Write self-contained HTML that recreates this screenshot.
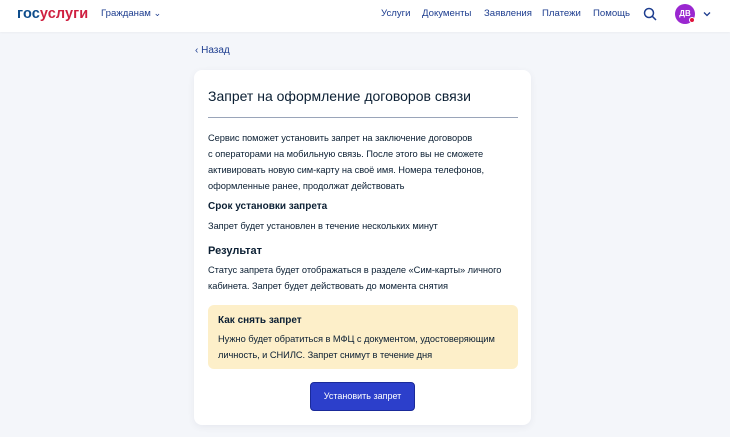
<!DOCTYPE html>
<html><head><meta charset="utf-8"><style>
*{margin:0;padding:0;box-sizing:border-box}
body{width:730px;height:437px;overflow:hidden;background:#f4f6fa;font-family:"Liberation Sans","Noto Sans CJK SC",sans-serif;color:#0b1f33;position:relative}
.hdr{position:absolute;left:0;top:0;width:730px;height:32px;background:#fff;box-shadow:0 1px 2px rgba(0,0,0,.04)}
.a{position:absolute;white-space:nowrap}
.logo{left:17px;top:6px;font-size:14.5px;font-weight:bold;letter-spacing:.1px}
.nav{top:8px;font-size:9.6px;color:#1d3d8f}
.card{position:absolute;left:194px;top:70px;width:337px;height:355px;background:#fff;border-radius:8px;box-shadow:0 2px 8px rgba(0,20,60,.06)}
.t{font-size:9.3px;line-height:16px;color:#0b1f33;letter-spacing:-0.05px}
.h{font-size:10.5px;font-weight:bold;color:#0b1f33}
</style></head><body>
<div class="hdr">
<div class="a logo"><span style="color:#0d4c8b">гос</span><span style="color:#cf1f40">услуги</span></div>
<div class="a nav" style="left:101px">Гражданам <span style="font-size:9px">&#x2304;</span></div>
<div class="a nav" style="left:381px">Услуги</div>
<div class="a nav" style="left:422px">Документы</div>
<div class="a nav" style="left:484px">Заявления</div>
<div class="a nav" style="left:542px">Платежи</div>
<div class="a nav" style="left:593px">Помощь</div>
<svg class="a" style="left:643px;top:7px" width="14" height="14" viewBox="0 0 14 14"><circle cx="6" cy="6" r="4.5" fill="none" stroke="#1d3d8f" stroke-width="1.5"/><path d="M9.3 9.3L13 13" stroke="#1d3d8f" stroke-width="1.5"/></svg>
<div class="a" style="left:675px;top:4px;width:20px;height:20px;border-radius:50%;background:#9a27d0;color:#fff;font-size:8px;font-weight:bold;text-align:center;line-height:20px">ДВ</div>
<div class="a" style="left:689px;top:17px;width:6px;height:6px;border-radius:50%;background:#e0113a;border:1px solid #fff"></div>
<svg class="a" style="left:703px;top:11px" width="8" height="6" viewBox="0 0 8 6"><path d="M1 1.5L4 4.5L7 1.5" fill="none" stroke="#1d3d8f" stroke-width="1.3"/></svg>
</div>
<div class="a" style="left:195px;top:45px;font-size:10px;color:#1d3d8f">‹ Назад</div>
<div class="card">
<div class="a" style="left:14px;top:18px;font-size:14px;color:#0b1f33">Запрет на оформление договоров связи</div>
<div class="a" style="left:14px;top:47px;width:310px;height:1px;background:#9aa5b9"></div>
<div class="a t" style="left:14px;top:60px">Сервис поможет установить запрет на заключение договоров<br>с операторами на мобильную связь. После этого вы не сможете<br>активировать новую сим-карту на своё имя. Номера телефонов,<br>оформленные ранее, продолжат действовать</div>
<div class="a h" style="left:14px;top:131px;font-size:10px">Срок установки запрета</div>
<div class="a t" style="left:14px;top:148px">Запрет будет установлен в течение нескольких минут</div>
<div class="a h" style="left:14px;top:175px;font-size:11px">Результат</div>
<div class="a t" style="left:14px;top:192px">Статус запрета будет отображаться в разделе «Сим-карты» личного<br>кабинета. Запрет будет действовать до момента снятия</div>
<div class="a" style="left:14px;top:235px;width:310px;height:64px;background:#fdefc9;border-radius:6px"></div>
<div class="a h" style="left:24px;top:245px;font-size:10px">Как снять запрет</div>
<div class="a t" style="left:24px;top:261px">Нужно будет обратиться в МФЦ с документом, удостоверяющим<br>личность, и СНИЛС. Запрет снимут в течение дня</div>
<div class="a" style="left:116px;top:312px;width:105px;height:29px;background:#2c3fcb;border:1px solid #1a2a9a;border-radius:4px;color:#fff;font-size:9px;text-align:center;line-height:27px">Установить запрет</div>
</div>
</body></html>
